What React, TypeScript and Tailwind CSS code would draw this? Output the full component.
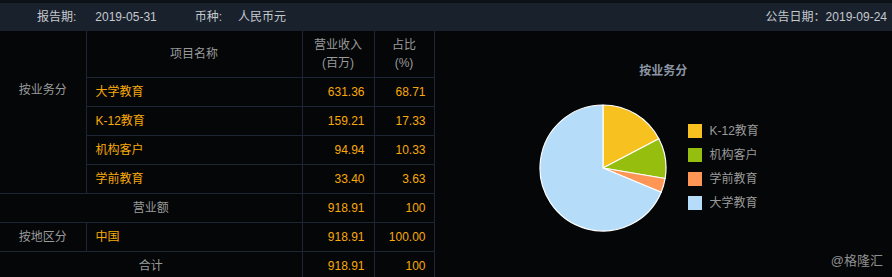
import React from "react";

const font = { fontFamily: '"Liberation Sans", "Noto Sans CJK SC", sans-serif' };

const slices = [
  { name: "K-12教育", value: 17.33, color: "#f7c21f" },
  { name: "机构客户", value: 10.33, color: "#95be0e" },
  { name: "学前教育", value: 3.63, color: "#ff9655" },
  { name: "大学教育", value: 68.71, color: "#b5dcf9" },
];

function Pie() {
  const cx = 64;
  const cy = 64;
  const r = 63;
  const total = slices.reduce((s, x) => s + x.value, 0);
  let start = -Math.PI / 2;
  return (
    <svg width="128" height="128" viewBox="0 0 128 128">
      {slices.map((s) => {
        const angle = (s.value / total) * Math.PI * 2;
        const end = start + angle;
        const x1 = cx + r * Math.cos(start);
        const y1 = cy + r * Math.sin(start);
        const x2 = cx + r * Math.cos(end);
        const y2 = cy + r * Math.sin(end);
        const large = angle > Math.PI ? 1 : 0;
        const d = `M${cx},${cy} L${x1},${y1} A${r},${r} 0 ${large} 1 ${x2},${y2} Z`;
        start = end;
        return <path key={s.name} d={d} fill={s.color} stroke="#ffffff" strokeWidth="1.2" strokeLinejoin="round" />;
      })}
    </svg>
  );
}

const cell = "border border-[#1c2634] text-[12px] h-[29px] p-0";

export default function App() {
  return (
    <div className="w-[892px] h-[277px] overflow-hidden bg-[#050607] relative" style={font}>
      <div className="h-[3px] bg-[#0d1218]" />
      <div className="h-[28px] bg-[#19212d] flex items-center text-[12px] text-[#c5c9ce]">
        <span className="ml-[37px]">报告期:</span>
        <span className="ml-[19px]">2019-05-31</span>
        <span className="ml-[38px]">币种:</span>
        <span className="ml-[16px]">人民币元</span>
        <span className="ml-auto mr-[5px]">公告日期：2019-09-24</span>
      </div>
      <div className="flex">
        <table className="border-collapse table-fixed w-[434px] bg-[#040608]">
          <colgroup>
            <col className="w-[86px]" />
            <col className="w-[216px]" />
            <col className="w-[72px]" />
            <col className="w-[60px]" />
          </colgroup>
          <tbody className="text-[#9a9a9a]">
            <tr>
              <td rowSpan={5} className={`${cell} border-l-0 border-t-0 text-center pb-[44px]`}>按业务分</td>
              <td className={`${cell} border-t-0 h-[46px] text-center`}>项目名称</td>
              <td className={`${cell} border-t-0 text-center leading-[18px]`}>营业收入<br />(百万)</td>
              <td className={`${cell} border-t-0 text-center leading-[18px]`}>占比<br />(%)</td>
            </tr>
            {[
              ["大学教育", "631.36", "68.71"],
              ["K-12教育", "159.21", "17.33"],
              ["机构客户", "94.94", "10.33"],
              ["学前教育", "33.40", "3.63"],
            ].map(([n, v, p]) => (
              <tr key={n}>
                <td className={`${cell} pl-[9px] text-[#f9a908]`}>{n}</td>
                <td className={`${cell} pr-[9px] text-right text-[#f9a908]`}>{v}</td>
                <td className={`${cell} pr-[8px] text-right text-[#f9a908]`}>{p}</td>
              </tr>
            ))}
            <tr>
              <td colSpan={2} className={`${cell} border-l-0 text-center`}>营业额</td>
              <td className={`${cell} pr-[9px] text-right text-[#f9a908]`}>918.91</td>
              <td className={`${cell} pr-[8px] text-right text-[#f9a908]`}>100</td>
            </tr>
            <tr>
              <td className={`${cell} border-l-0 text-center`}>按地区分</td>
              <td className={`${cell} pl-[9px] text-[#f9a908]`}>中国</td>
              <td className={`${cell} pr-[9px] text-right text-[#f9a908]`}>918.91</td>
              <td className={`${cell} pr-[8px] text-right text-[#f9a908]`}>100.00</td>
            </tr>
            <tr>
              <td colSpan={2} className={`${cell} border-l-0 text-center`}>合计</td>
              <td className={`${cell} pr-[9px] text-right text-[#f9a908]`}>918.91</td>
              <td className={`${cell} pr-[8px] text-right text-[#f9a908]`}>100</td>
            </tr>
          </tbody>
        </table>
        <div className="flex-1 flex flex-col">
          <div className="mt-[31px] text-center text-[12px] font-bold text-[#8b96a5]">按业务分</div>
          <div className="flex mt-[24px] pl-[104px]">
            <Pie />
            <div className="ml-[21px] mt-[20px] flex flex-col gap-[10px]">
              {slices.map((s) => (
                <div key={s.name} className="flex items-center h-[14px] text-[12px] text-[#9a9a9a]">
                  <span className="w-[14px] h-[14px]" style={{ backgroundColor: s.color }} />
                  <span className="ml-[8px]">{s.name}</span>
                </div>
              ))}
            </div>
          </div>
        </div>
      </div>
      <div className="absolute right-[9px] bottom-[7px] text-[13px] text-[#8f8f8f]">@格隆汇</div>
    </div>
  );
}
